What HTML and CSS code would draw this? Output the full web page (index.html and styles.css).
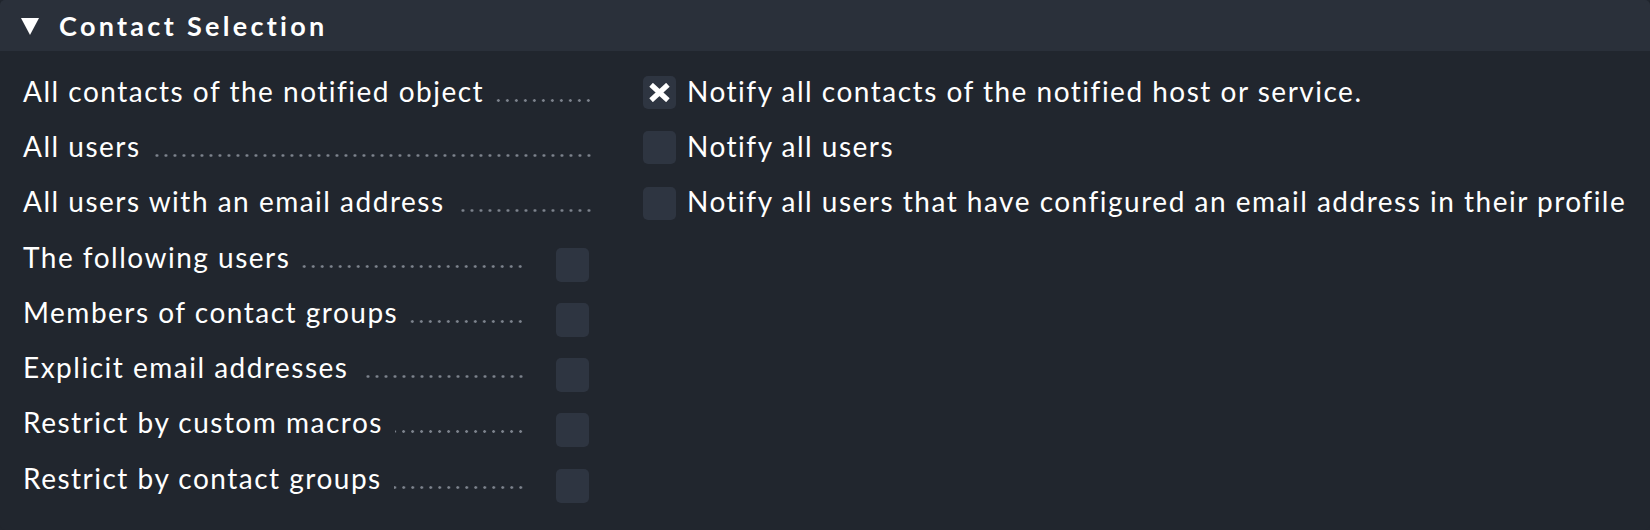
FILE: index.html
```html
<!DOCTYPE html>
<html>
<head>
<meta charset="utf-8">
<link rel="stylesheet" href="styles.css">
</head>
<body>
<div class="panel">
  <div class="header">
    <span class="tri"></span>
    <span class="title">Contact Selection</span>
  </div>
  <div class="body">
    <div class="row wide">
      <div class="label"><span class="txt">All contacts of the notified object</span><span class="dots"></span></div>
      <div class="value"><span class="cb checked"><svg width="21" height="19" viewBox="0 0 21 19"><path d="M4 3.5 L17 15.5 M17 3.5 L4 15.5" stroke="#fff" stroke-width="5.2" stroke-linecap="square"/></svg></span><span class="vtxt">Notify all contacts of the notified host or service.</span></div>
    </div>
    <div class="row wide">
      <div class="label"><span class="txt">All users</span><span class="dots"></span></div>
      <div class="value"><span class="cb"></span><span class="vtxt">Notify all users</span></div>
    </div>
    <div class="row wide">
      <div class="label"><span class="txt">All users with an email address</span><span class="dots"></span></div>
      <div class="value"><span class="cb"></span><span class="vtxt">Notify all users that have configured an email address in their profile</span></div>
    </div>
    <div class="row narrow">
      <div class="label"><span class="txt">The following users</span><span class="dots"></span></div>
      <div class="value"><span class="cb low"></span></div>
    </div>
    <div class="row narrow">
      <div class="label"><span class="txt">Members of contact groups</span><span class="dots"></span></div>
      <div class="value"><span class="cb low"></span></div>
    </div>
    <div class="row narrow">
      <div class="label"><span class="txt">Explicit email addresses</span><span class="dots"></span></div>
      <div class="value"><span class="cb low"></span></div>
    </div>
    <div class="row narrow">
      <div class="label"><span class="txt">Restrict by custom macros</span><span class="dots"></span></div>
      <div class="value"><span class="cb low"></span></div>
    </div>
    <div class="row narrow">
      <div class="label"><span class="txt">Restrict by contact groups</span><span class="dots"></span></div>
      <div class="value"><span class="cb low"></span></div>
    </div>
  </div>
</div>
</body>
</html>
```
FILE: styles.css
```css
html, body {
  margin: 0;
  padding: 0;
  background: #21262e;
}
body {
  font-family: Lato, "Noto Sans", sans-serif;
  color: #ffffff;
  width: 1650px;
  height: 530px;
  overflow: hidden;
}
.panel {
  width: 1650px;
  height: 530px;
  background: #21262e;
  border-radius: 5px;
  overflow: hidden;
}
.header {
  height: 51px;
  background: #2a303a;
  display: flex;
  align-items: center;
  padding-left: 21px;
  box-sizing: border-box;
}
.tri {
  width: 0;
  height: 0;
  border-left: 9.5px solid transparent;
  border-right: 9.5px solid transparent;
  border-top: 17px solid #ffffff;
  margin-top: 2px;
}
.title {
  margin-left: 20px;
  font-weight: bold;
  font-size: 27px;
  letter-spacing: 3.3px;
}
.body {
  padding: 14px 0 0 23px;
}
.row {
  height: 55.3px;
  display: flex;
  align-items: center;
}
.label {
  display: flex;
  align-items: baseline;
  font-size: 28px;
  letter-spacing: 1.5px;
  flex: none;
  margin-top: -4px;
}
.wide .label { width: 567px; }
.narrow .label { width: 499px; }
.txt {
  white-space: nowrap;
}
.dots {
  flex: 1;
  display: inline-block;
  height: 3px;
  margin-left: 12px;
  margin-right: -3px;
  background-image: radial-gradient(circle, #7d838d 1.1px, transparent 1.6px);
  background-size: 9px 3px;
  background-position: right bottom;
  background-repeat: repeat-x;
}
.value {
  display: flex;
  align-items: center;
}
.wide .value {
  margin-left: 53px;
  margin-top: -4px;
}
.narrow .value { margin-left: 34px; }
.cb {
  width: 33px;
  height: 33px;
  background: #2e3541;
  border-radius: 5px;
  display: flex;
  align-items: center;
  justify-content: center;
  flex: none;
}
.wide .cb { margin-top: 4px; }
.cb.low {
  height: 34px;
  margin-top: 12px;
}
.vtxt {
  margin-left: 11px;
  font-size: 28px;
  letter-spacing: 1.5px;
  white-space: nowrap;
}
```
